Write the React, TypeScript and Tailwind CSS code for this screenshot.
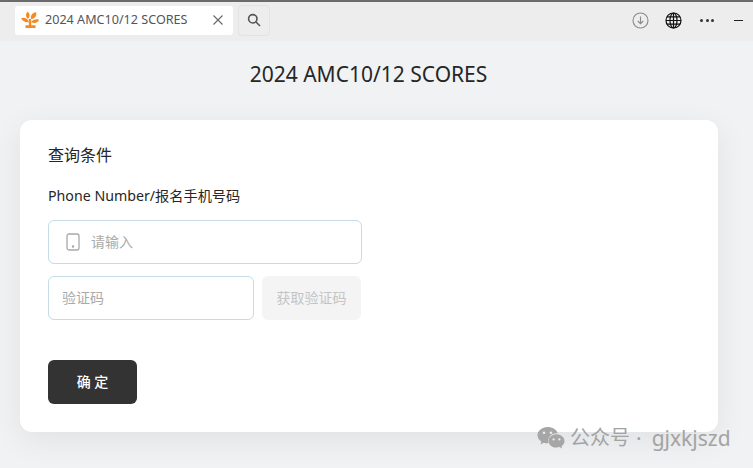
import React from "react";

const font = { fontFamily: '"Noto Sans", "Noto Sans CJK SC", sans-serif' };

function Leaf() {
  return (
    <svg width="18" height="18" viewBox="0 0 18 18" fill="#f58a1f">
      <path d="M6.800 8C4.500 6 4.300 3 6.500.8c2.600 1.800 3 4.800.3 7.200z" />
      <path d="M10 8C9.200 4.500 11.200 1.800 15.200 1.200c.7 3.800-1.300 6.600-5.200 6.800z" />
      <path d="M7.800 11C5 11.800 1.800 10.300 0 7.200c3.400-1.500 6.800.3 7.800 3.800z" />
      <path d="M10.200 11c1.900-2.600 4.800-3.200 7.800-2.200-1.300 3.200-4.800 4.400-7.800 2.200z" />
      <path d="M7.800 8h2.400v6.300h4.300V17H4.500v-2.700h3.300z" />
    </svg>
  );
}

function Wechat() {
  return (
    <svg width="28" height="24" viewBox="0 0 28 24" fill="#a6a6a6">
      <path d="M10.500 1C5 1 .5 4.700.5 9.200c0 2.600 1.500 4.800 3.800 6.300L3.500 18.400l3.300-1.700c1.200.4 2.400.6 3.700.6.400 0 .7 0 1-.1-.2-.7-.4-1.500-.4-2.200 0-4.300 3.900-7.700 8.700-7.700h.9C19.700 3.500 15.500 1 10.500 1z" />
      <path d="M27.500 14.900c0-3.700-3.600-6.700-8-6.700s-8 3-8 6.700 3.600 6.700 8 6.700c1 0 2-.2 2.900-.5l2.700 1.500-.7-2.400c1.900-1.200 3.100-3 3.100-5.300z" />
      <circle cx="7" cy="6.800" r="1.300" fill="#eceded" />
      <circle cx="14" cy="6.800" r="1.300" fill="#eceded" />
      <circle cx="16.600" cy="13.400" r="1.100" fill="#eceded" />
      <circle cx="22.400" cy="13.400" r="1.100" fill="#eceded" />
    </svg>
  );
}

export default function App() {
  return (
    <div className="relative flex h-[468px] w-[753px] flex-col overflow-hidden bg-[#f1f2f4]" style={font}>
      <div className="flex h-[41px] shrink-0 items-center border-t-2 border-[#6b6b6b] bg-[#ededed] pb-[3px]">
        <div className="ml-[15px] flex h-[29px] w-[218px] items-center rounded-[3px] bg-white pl-[6px] pr-[10px]">
          <Leaf />
          <span className="ml-[6px] flex-1 truncate text-[12.600px] text-[#555]">2024 AMC10/12 SCORES</span>
          <svg width="10" height="10" viewBox="0 0 10 10" stroke="#666" strokeWidth="1.100" fill="none">
            <path d="M.5.500l9 9M9.500.500l-9 9" />
          </svg>
        </div>
        <div className="ml-[5px] flex h-[31px] w-[32px] items-center justify-center rounded-[4px] border border-[#e3e3e3] bg-[#ededed]">
          <svg width="14" height="14" viewBox="0 0 14 14" stroke="#555" strokeWidth="1.600" fill="none">
            <circle cx="5.800" cy="5.800" r="4.200" />
            <path d="M9 9l4 4" />
          </svg>
        </div>
        <div className="ml-auto flex items-center">
          <svg width="17" height="17" viewBox="0 0 17 17" stroke="#8a8a8a" strokeWidth="1.100" fill="none">
            <circle cx="8.500" cy="8.500" r="7.500" />
            <path d="M8.500 4.500v7M5.800 9l2.700 2.700L11.200 9" />
          </svg>
          <svg className="ml-[16px]" width="17" height="17" viewBox="0 0 17 17" stroke="#111" strokeWidth="1.200" fill="none">
            <circle cx="8.500" cy="8.500" r="7.500" />
            <ellipse cx="8.500" cy="8.500" rx="3.500" ry="7.500" />
            <path d="M8.500 1v15M1 8.500h15M2 4.800h13M2 12.200h13" />
          </svg>
          <div className="ml-[18px] flex gap-[2.500px]">
            <span className="h-[3px] w-[3px] rounded-full bg-[#333]" />
            <span className="h-[3px] w-[3px] rounded-full bg-[#333]" />
            <span className="h-[3px] w-[3px] rounded-full bg-[#333]" />
          </div>
          <div className="ml-[20px] mr-[10px] h-px w-[9px] bg-[#222]" />
        </div>
      </div>

      <h1 className="mt-[18px] h-[30px] pr-[16px] text-center text-[21px] font-normal leading-[30px] text-[#262626]">2024 AMC10/12 SCORES</h1>

      <div className="mx-[20px] mt-[31px] h-[312px] w-[698px] rounded-[12px] bg-white px-[28px] pt-[24px] shadow-[0_8px_32px_rgba(0,0,0,0.07)]">
        <div className="text-[16px] leading-[22px] text-[#262626]">查询条件</div>
        <div className="mt-[19px] text-[14.200px] leading-[22px] text-[#262626]">Phone Number/报名手机号码</div>
        <div className="mt-[13px] flex h-[44px] w-[314px] items-center rounded-[6px] border border-[#c5dce6] pl-[17px]">
          <svg width="14" height="18" viewBox="0 0 14 18" fill="none" stroke="#a8a8a8" strokeWidth="1.300">
            <rect x="1" y="1" width="12" height="16" rx="2" />
            <circle cx="7" cy="13.500" r=".6" fill="#a8a8a8" />
          </svg>
          <span className="ml-[11px] pb-[2px] text-[14px] text-[#aaa]">请输入</span>
        </div>
        <div className="mt-[12px] flex gap-[8px]">
          <div className="flex h-[44px] w-[206px] items-center rounded-[6px] border border-[#c5dce6] pb-[2px] pl-[13px] text-[14px] text-[#aaa]">验证码</div>
          <div className="flex h-[44px] w-[99px] items-center justify-center rounded-[6px] bg-[#f4f4f4] pb-[2px] text-[14px] text-[#c4c4c4]">获取验证码</div>
        </div>
        <div className="mt-[40px] flex h-[44px] w-[89px] items-center justify-center rounded-[6px] bg-[#333] pb-[2px] text-[14px] font-medium text-white">确 定</div>
      </div>

      <div className="absolute left-[537px] top-[426px] flex items-center whitespace-pre text-[#a3a3a3]">
        <Wechat />
        <span className="ml-[5px] text-[20px] leading-[24px]">公众号</span>
        <span className="ml-[6px] text-[21px] leading-[24px]">·</span>
        <span className="ml-[10px] text-[21px] leading-[24px]">gjxkjszd</span>
      </div>
    </div>
  );
}
